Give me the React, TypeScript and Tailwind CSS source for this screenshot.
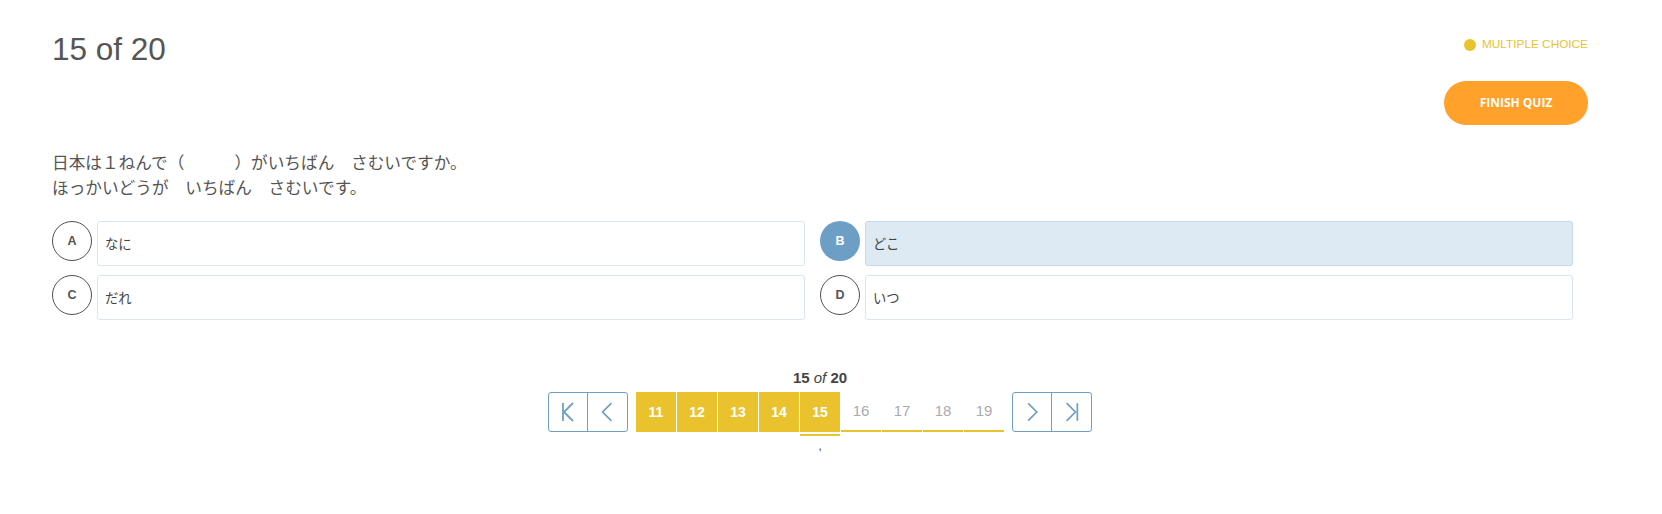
import React from "react";

const BLUE = "#6f9fc5";

function PagerIcon({ kind }: { kind: "first" | "prev" | "next" | "last" }) {
  return (
    <svg width="40" height="40" viewBox="0 0 40 40" fill="none" stroke={BLUE} strokeWidth="1.8" strokeLinecap="butt" strokeLinejoin="miter">
      {kind === "first" && (
        <>
          <path d="M15 11 V29" />
          <path d="M25 11 L16 20 L25 29" />
        </>
      )}
      {kind === "prev" && <path d="M24 11 L15 20 L24 29" />}
      {kind === "next" && <path d="M16 11 L25 20 L16 29" />}
      {kind === "last" && (
        <>
          <path d="M15 11 L24 20 L15 29" />
          <path d="M26 11 V29" />
        </>
      )}
    </svg>
  );
}

const options = [
  { letter: "A", text: "なに", selected: false },
  { letter: "B", text: "どこ", selected: true },
  { letter: "C", text: "だれ", selected: false },
  { letter: "D", text: "いつ", selected: false },
];

export default function App() {
  return (
    <div className="min-h-[514px] bg-white pl-[52px] pr-[74px] pt-[33px] font-['Liberation_Sans','Noto_Sans_CJK_JP',sans-serif] text-[#555]">
      {/* header */}
      <div className="flex items-start justify-between">
        <h1 className="text-[31.5px] leading-[32px] font-normal text-[#555]">15 of 20</h1>
        <div className="flex flex-col items-end">
          <div className="mt-[6px] flex h-[12px] items-center gap-[6px]">
            <span className="h-[12px] w-[12px] rounded-full bg-[#e8c22f]" />
            <span className="text-[11.8px] leading-none text-[#e8c22f]">MULTIPLE CHOICE</span>
          </div>
          <button className="mt-[30px] flex h-[44px] w-[144px] items-center justify-center rounded-full bg-[#ffa12b] font-['Open_Sans',sans-serif] text-[12px] font-bold text-white">
            FINISH QUIZ
          </button>
        </div>
      </div>

      {/* question */}
      <div className="mt-[25px] font-['Noto_Sans_CJK_JP',sans-serif] text-[16.67px] leading-[25px] text-[#555]">
        <p>日本は１ねんで（　　　）がいちばん　さむいですか。</p>
        <p>ほっかいどうが　いちばん　さむいです。</p>
      </div>

      {/* options */}
      <div className="mt-[21px] grid grid-cols-2 gap-x-[15px] gap-y-[9px] pr-[15px]">
        {options.map((o) => (
          <div key={o.letter} className="flex items-start gap-[5px]">
            <div
              className={
                o.selected
                  ? "flex h-[40px] w-[40px] shrink-0 items-center justify-center rounded-full bg-[#6d9ec6] text-[12.5px] font-bold text-white"
                  : "flex h-[40px] w-[40px] shrink-0 items-center justify-center rounded-full border border-[#505050] text-[12.5px] font-bold text-[#555]"
              }
            >
              {o.letter}
            </div>
            <div
              className={
                o.selected
                  ? "flex h-[45px] flex-1 items-center rounded-[3px] border border-[#c5d9ea] bg-[#dde9f3] px-[7px] font-['Noto_Sans_CJK_JP',sans-serif] text-[13.33px] text-[#444]"
                  : "flex h-[45px] flex-1 items-center rounded-[3px] border border-[#d8e6f1] bg-white px-[7px] font-['Noto_Sans_CJK_JP',sans-serif] text-[13.33px] text-[#444]"
              }
            >
              {o.text}
            </div>
          </div>
        ))}
      </div>

      {/* pager */}
      <div className="mt-[49px] text-center text-[15px] leading-[17px] font-bold text-[#444]">
        15 <i className="font-normal">of</i> 20
      </div>
      <div className="mt-[6px] flex items-start justify-center">
        <div className="flex h-[40px] rounded-[3px] border border-[#6f9fc5]">
          <div className="flex h-[38px] w-[39px] items-center justify-center border-r border-[#6f9fc5]">
            <div className="-mt-px -ml-px"><PagerIcon kind="first" /></div>
          </div>
          <div className="flex h-[38px] w-[39px] items-center justify-center">
            <PagerIcon kind="prev" />
          </div>
        </div>
        <div className="ml-[8px] flex items-start gap-[1px]">
          {[11, 12, 13, 14].map((n) => (
            <div key={n} className="flex h-[40px] w-[40px] items-center justify-center bg-[#e9c22e] text-[14px] font-bold text-white">
              {n}
            </div>
          ))}
          <div className="flex flex-col">
            <div className="flex h-[40px] w-[40px] items-center justify-center bg-[#e9c22e] text-[14px] font-bold text-white">15</div>
            <div className="mt-[2px] h-[2px] w-[40px] bg-[#e9c22e]" />
          </div>
          {[16, 17, 18, 19].map((n) => (
            <div key={n} className="flex h-[40px] w-[40px] items-center justify-center border-b-2 border-[#e9c22e] text-[15px] text-[#aaa]">
              {n}
            </div>
          ))}
        </div>
        <div className="ml-[8px] flex h-[40px] rounded-[3px] border border-[#6f9fc5]">
          <div className="flex h-[38px] w-[39px] items-center justify-center border-r border-[#6f9fc5]">
            <PagerIcon kind="next" />
          </div>
          <div className="flex h-[38px] w-[39px] items-center justify-center">
            <PagerIcon kind="last" />
          </div>
        </div>
      </div>
      <div className="mt-[2px] text-center text-[13px] leading-[16px] text-[#555]">,</div>
    </div>
  );
}
